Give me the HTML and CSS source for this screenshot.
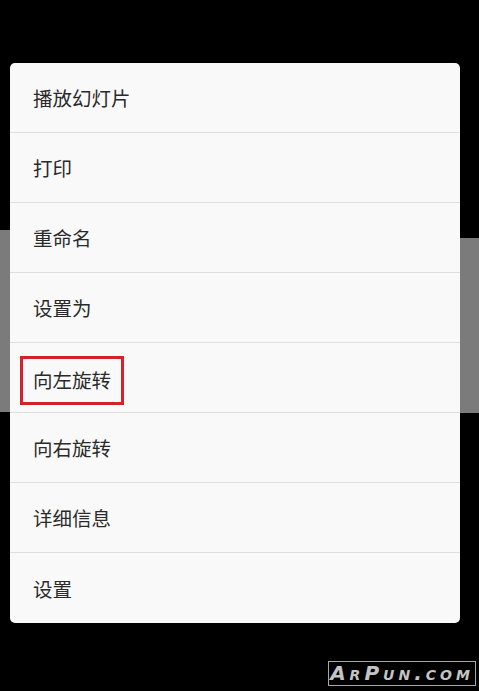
FILE: index.html
```html
<!DOCTYPE html>
<html lang="zh-CN">
<head>
<meta charset="utf-8">
<title>菜单</title>
<link rel="stylesheet" href="styles.css">
</head>
<body>
<div class="screen">
  <ul class="menu">
    <li class="item"><span class="label">播放幻灯片</span></li>
    <li class="item"><span class="label">打印</span></li>
    <li class="item"><span class="label">重命名</span></li>
    <li class="item"><span class="label">设置为</span></li>
    <li class="item"><span class="label mark">向左旋转</span></li>
    <li class="item"><span class="label">向右旋转</span></li>
    <li class="item"><span class="label">详细信息</span></li>
    <li class="item last"><span class="label">设置</span></li>
  </ul>
  <div class="footer">
    <div class="watermark">ArPun.com</div>
  </div>
</div>
</body>
</html>
```

FILE: styles.css
```css
html, body {
  margin: 0;
  padding: 0;
  background: #000;
}
.screen {
  width: 479px;
  height: 691px;
  box-sizing: border-box;
  padding-top: 63px;
  background-color: #000;
  background-image:
    linear-gradient(to bottom, transparent 230px, #7b7b7b 230px, #7b7b7b 412px, transparent 412px),
    linear-gradient(to bottom, transparent 238px, #7b7b7b 238px, #7b7b7b 413px, transparent 413px);
  background-size: 10px 100%, 19px 100%;
  background-position: left top, right top;
  background-repeat: no-repeat;
  font-family: "Noto Sans CJK SC", "Noto Sans", sans-serif;
}
.menu {
  list-style: none;
  margin: 0 19px 0 10px;
  padding: 0;
  width: 450px;
  background: #f9f9f9;
  border-radius: 5px;
  overflow: hidden;
}
.item {
  height: 70px;
  box-sizing: border-box;
  border-bottom: 1px solid #dedede;
  display: flex;
  align-items: center;
  padding-left: 23px;
}
.item.last {
  border-bottom: none;
}
.label {
  font-size: 19.5px;
  color: #2a2a2a;
  line-height: 1;
  padding-top: 1px;
}
.label.mark {
  outline: 3px solid #d2232c;
  outline-offset: 0;
  padding: 11px 10px 12px 10px;
  margin-left: -10px;
  margin-top: 6px;
}
.footer {
  display: flex;
  justify-content: flex-end;
  padding-top: 38px;
  padding-right: 3px;
}
.watermark {
  width: 148px;
  height: 25px;
  box-sizing: border-box;
  border: 1px solid #a8a8a8;
  color: #c4c4c4;
  font-family: "DejaVu Sans", sans-serif;
  font-weight: bold;
  font-style: italic;
  font-variant: small-caps;
  font-size: 20px;
  letter-spacing: 4px;
  line-height: 22px;
  text-align: center;
}
```
